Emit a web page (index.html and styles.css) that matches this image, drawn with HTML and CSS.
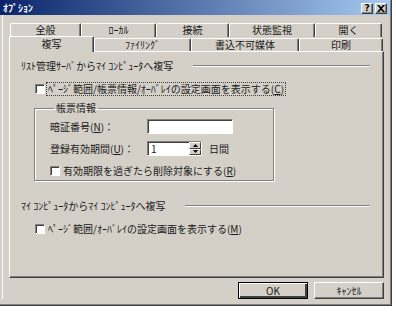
FILE: index.html
```html
<!DOCTYPE html>
<html lang="ja">
<head>
  <meta charset="UTF-8" />
  <link rel="stylesheet" href="styles.css">
  <title>ｵﾌﾟｼｮﾝ</title>
</head>
<body>
  <div class="window">
    <div class="frame">
      <!-- Title bar -->
      <div class="titlebar">
        <span class="title">ｵﾌﾟｼｮﾝ</span>
        <div class="title-btns">
          <span class="tbtn">?</span>
          <span class="tbtn close">
            <svg width="8" height="7" viewBox="0 0 8 7"><path d="M0 0h2l2 2 2-2h2L5 3.5 8 7H6L4 5 2 7H0l3-3.5z" fill="#000"/></svg>
          </span>
        </div>
      </div>

      <div class="client">
        <!-- Tabs -->
        <div class="tabrow back">
          <div class="tab" style="width:71px">全般</div>
          <div class="tab" style="width:75px">ﾛｰｶﾙ</div>
          <div class="tab" style="width:73px">接続</div>
          <div class="tab" style="width:86px">状態監視</div>
          <div class="tab" style="width:67px">開く</div>
        </div>
        <div class="tabrow front">
          <div class="tab active" style="width:85px">複写</div>
          <div class="tab" style="width:97px">ﾌｧｲﾘﾝｸﾞ</div>
          <div class="tab" style="width:108px">書込不可媒体</div>
          <div class="tab" style="width:84px">印刷</div>
        </div>

        <!-- Tab page -->
        <div class="panel">
          <div class="section-head">
            <span>ﾘｽﾄ管理ｻｰﾊﾞからﾏｲ ｺﾝﾋﾟｭｰﾀへ複写</span>
            <span class="etch"></span>
          </div>
          <div class="check-row indent">
            <span class="check"></span>
            <span class="check-label focus">ﾍﾟｰｼﾞ範囲/帳票情報/ｵｰﾊﾞﾚｲの設定画面を表示する(<u>C</u>)</span>
          </div>

          <fieldset class="group">
            <legend>帳票情報</legend>
            <div class="field-row">
              <span class="field-label">暗証番号(<u>N</u>)：</span>
              <span class="edit"></span>
            </div>
            <div class="field-row">
              <span class="field-label">登録有効期間(<u>U</u>)：</span>
              <span class="edit spin">
                <span class="spin-text">1</span>
                <span class="spin-btns">
                  <span class="sbtn"><svg width="5" height="3" viewBox="0 0 5 3"><path d="M2.5 0L5 3H0z" fill="#000"/></svg></span>
                  <span class="sbtn"><svg width="5" height="3" viewBox="0 0 5 3"><path d="M0 0h5L2.5 3z" fill="#000"/></svg></span>
                </span>
              </span>
              <span class="unit">日間</span>
            </div>
            <div class="check-row">
              <span class="check"></span>
              <span class="check-label">有効期限を過ぎたら削除対象にする(<u>R</u>)</span>
            </div>
          </fieldset>

          <div class="section-head second">
            <span>ﾏｲ ｺﾝﾋﾟｭｰﾀからﾏｲ ｺﾝﾋﾟｭｰﾀへ複写</span>
            <span class="etch"></span>
          </div>
          <div class="check-row indent">
            <span class="check"></span>
            <span class="check-label">ﾍﾟｰｼﾞ範囲/ｵｰﾊﾞﾚｲの設定画面を表示する(<u>M</u>)</span>
          </div>
        </div>

        <!-- Dialog buttons -->
        <div class="buttons">
          <button class="btn default">OK</button>
          <button class="btn">ｷｬﾝｾﾙ</button>
        </div>
      </div>
    </div>
  </div>
</body>
</html>
```

FILE: styles.css
```css
/* Reset */
* {
  margin: 0;
  padding: 0;
  box-sizing: border-box;
}

body {
  background: #fff;
  font-family: "Noto Sans CJK JP", "Noto Sans", sans-serif;
  font-size: 10px;
  line-height: 12px;
  color: #1a1a1a;
}

/* Window frame */
.window {
  width: 392px;
  height: 306px;
  background: #d4d0c8;
  border-right: 1px solid #404040;
  border-bottom: 1px solid #404040;
}

.frame {
  height: 100%;
  border-right: 1px solid #808080;
  border-bottom: 1px solid #808080;
}

/* Title bar */
.titlebar {
  height: 15px;
  display: flex;
  align-items: center;
  justify-content: space-between;
  background: linear-gradient(to right, #0a246a, #a6caf0);
  padding: 0 3px 0 3px;
}

.title {
  color: #fff;
  font-weight: bold;
}

.title-btns {
  display: flex;
  gap: 2px;
  margin-top: 2px;
}

.tbtn {
  width: 12px;
  height: 11px;
  display: flex;
  align-items: center;
  justify-content: center;
  background: #d4d0c8;
  border: 1px solid;
  border-color: #fff #404040 #404040 #fff;
  box-shadow: inset -1px -1px #808080;
  font-family: "DejaVu Sans", sans-serif;
  font-weight: bold;
  font-size: 9px;
  line-height: 9px;
  color: #000;
}

/* Client area */
.client {
  margin-left: 2px;
  border-left: 1px solid #fff;
  padding: 8px 6px 0 6px;
}

/* Tabs */
.tabrow {
  display: flex;
  height: 14px;
}

.tabrow.back {
  padding-left: 1px;
}

.tab {
  height: 14px;
  background: #d4d0c8;
  border-top: 1px solid #fff;
  border-left: 1px solid #fff;
  border-right: 1px solid #404040;
  box-shadow: inset -1px 0 #808080;
  border-radius: 2px 2px 0 0;
  text-align: center;
  line-height: 12px;
}

.tabrow.front .tab {
  margin-top: 1px;
  height: 13px;
  line-height: 11px;
}

.tabrow.front .tab.active {
  position: relative;
  z-index: 1;
  margin-top: -1px;
  height: 16px;
  line-height: 13px;
}

/* Tab page */
.panel {
  height: 227px;
  border-top: 1px solid #fff;
  border-left: 1px solid #fff;
  border-right: 1px solid #404040;
  border-bottom: 1px solid #404040;
  box-shadow: inset -1px -1px #808080;
  padding: 8px 13px 0 11px;
}

.section-head {
  display: flex;
  align-items: center;
  gap: 20px;
}

.section-head.second {
  margin-top: 19px;
}

.etch {
  flex: 1;
  height: 2px;
  border-top: 1px solid #808080;
  border-bottom: 1px solid #fff;
}

/* Check boxes */
.check-row {
  display: flex;
  align-items: center;
  height: 15px;
}

.check-row.indent {
  margin-top: 9px;
  padding-left: 14px;
}

.check {
  width: 10px;
  height: 10px;
  background: #fff;
  border: 1px solid;
  border-color: #808080 #fff #fff #808080;
  box-shadow: inset 1px 1px #404040;
}

.check-label {
  margin-left: 1px;
  padding: 0 1px;
  border: 1px solid transparent;
  line-height: 12px;
}

.check-label.focus {
  border: 1px dotted #404040;
}

/* Group box */
.group {
  width: 240px;
  margin: 6px 0 0 13px;
  border: 1px solid #808080;
  box-shadow: inset 1px 1px #fff, 1px 1px #fff;
  padding: 5px 4px 2px 15px;
}

.group legend {
  margin-left: 4px;
  padding: 0 2px;
}

.field-row {
  display: flex;
  align-items: center;
  height: 15px;
  margin-bottom: 7px;
}

.field-label {
  width: 97px;
}

.edit {
  width: 86px;
  height: 15px;
  background: #fff;
  border: 1px solid;
  border-color: #808080 #fff #fff #808080;
  box-shadow: inset 1px 1px #404040;
}

.edit.spin {
  width: 55px;
  display: flex;
  justify-content: space-between;
}

.spin-text {
  padding: 1px 0 0 3px;
  line-height: 11px;
}

.spin-btns {
  width: 12px;
  display: flex;
  flex-direction: column;
}

.sbtn {
  flex: 1;
  display: flex;
  align-items: center;
  justify-content: center;
  background: #d4d0c8;
  border: 1px solid;
  border-color: #fff #404040 #404040 #fff;
}

.unit {
  margin-left: 7px;
}

.group .check-row {
  margin-top: 1px;
}

/* Buttons */
.buttons {
  display: flex;
  justify-content: flex-end;
  gap: 6px;
  margin-top: 4px;
}

.btn {
  width: 70px;
  height: 17px;
  font: inherit;
  color: inherit;
  background: #d4d0c8;
  border: 1px solid;
  border-color: #fff #404040 #404040 #fff;
  box-shadow: inset -1px -1px #808080;
}

.btn.default {
  border: 1px solid #000;
  box-shadow: inset 1px 1px #fff, inset -2px -2px #404040, inset -1px -1px #808080;
}
```
